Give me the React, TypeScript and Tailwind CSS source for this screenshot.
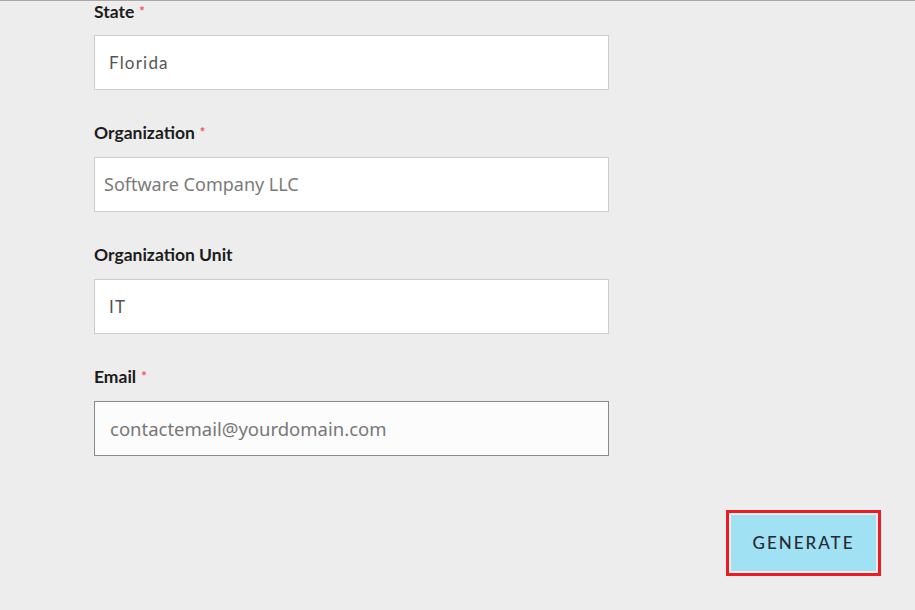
import React from "react";

function Label({ text, required }: { text: string; required?: boolean }) {
  return (
    <div className="h-[24px] flex items-center text-[17.5px] font-bold text-[#1c1c1c] leading-none -mt-[1px]" style={{ fontFamily: "Lato, sans-serif" }}>
      <span>{text}</span>
      {required && <span className="ml-[5px] text-[#e9545a] text-[13px] -mt-[2px]">*</span>}
    </div>
  );
}

export default function App() {
  return (
    <div className="w-[915px] h-[610px] bg-[#ededed] border-t border-[#a8a8a8] overflow-hidden">
      <div className="pl-[94px] w-[609px] flex flex-col">
        <Label text="State" required />
        <div className="mt-[11px] h-[55px] bg-white border border-[#cccccc] flex items-center pl-[14px] text-[17px] tracking-[1.2px] text-[#555]" style={{ fontFamily: "Lato, sans-serif" }}>
          Florida
        </div>
        <div className="mt-[32px]">
          <Label text="Organization" required />
        </div>
        <div className="mt-[12px] h-[55px] bg-white border border-[#cccccc] flex items-center pl-[9px] text-[18px] text-[#7a7a7a]" style={{ fontFamily: "'Noto Sans', sans-serif" }}>
          Software Company LLC
        </div>
        <div className="mt-[32px]">
          <Label text="Organization Unit" />
        </div>
        <div className="mt-[12px] h-[55px] bg-white border border-[#cccccc] flex items-center pl-[14px] text-[17px] tracking-[1.2px] text-[#555]" style={{ fontFamily: "Lato, sans-serif" }}>
          IT
        </div>
        <div className="mt-[32px]">
          <Label text="Email" required />
        </div>
        <div className="mt-[12px] h-[55px] bg-[#fcfcfc] border border-[#8a8a8a] flex items-center pl-[15px] text-[18.5px] text-[#777]" style={{ fontFamily: "'Noto Sans', sans-serif" }}>
          contactemail@yourdomain.com
        </div>
      </div>
      <div className="flex justify-end pr-[34px] mt-[54px]">
        <div className="border-[3px] border-[#ec1c24] p-[2px] bg-[#ededed]">
          <button className="w-[145px] h-[56px] bg-[#a0e1f3] text-[17px] tracking-[2px] text-[#262b36] font-medium flex items-center justify-center" style={{ fontFamily: "Lato, sans-serif" }}>
            GENERATE
          </button>
        </div>
      </div>
    </div>
  );
}
